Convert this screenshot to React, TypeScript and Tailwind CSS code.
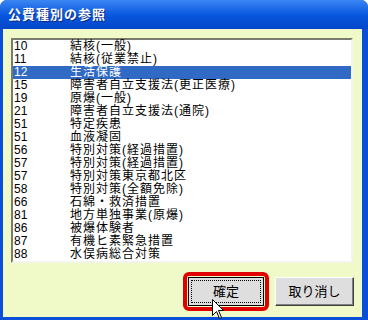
import React from "react";

const rows: [string, string][] = [
  ["10", "結核(一般)"],
  ["11", "結核(従業禁止)"],
  ["12", "生活保護"],
  ["15", "障害者自立支援法(更正医療)"],
  ["19", "原爆(一般)"],
  ["21", "障害者自立支援法(通院)"],
  ["51", "特定疾患"],
  ["51", "血液凝固"],
  ["56", "特別対策(経過措置)"],
  ["57", "特別対策(経過措置)"],
  ["57", "特別対策東京都北区"],
  ["58", "特別対策(全額免除)"],
  ["66", "石綿・救済措置"],
  ["81", "地方単独事業(原爆)"],
  ["86", "被爆体験者"],
  ["87", "有機ヒ素緊急措置"],
  ["88", "水俣病総合対策"],
];

const font = { fontFamily: '"Liberation Sans", "Noto Sans CJK JP", sans-serif' };

export default function App() {
  const selected = 2;

  return (
    <div className="relative w-[368px] h-[320px] overflow-hidden bg-white" style={font}>
      <div className="flex flex-col w-full h-full rounded-t-[7px] overflow-hidden bg-[#0a4fd8]">
        {/* title bar */}
        <div className="h-[29px] shrink-0 flex items-center pl-[8px] bg-gradient-to-b from-[#3a86f2] via-[#0858e0] to-[#0446c8]">
          <span className="text-white text-[13px] font-bold tracking-[1px] [text-shadow:1px_1px_0_#0a2a80]">
            公費種別の参照
          </span>
        </div>

        {/* window body */}
        <div className="flex-1 flex flex-col ml-[3px] mr-[6px] mb-[3px] bg-[#effac8]">
          {/* list box */}
          <div className="ml-[8px] mt-[9px] w-[342px] border-2 border-t-[#7b7b6b] border-l-[#7b7b6b] border-r-[#f4f4ee] border-b-[#f4f4ee] bg-white">
            <div className="flex flex-col">
              {rows.map(([code, name], i) => (
                <div
                  key={i}
                  className={
                    i === selected
                      ? "flex h-[13px] items-center text-[12px] leading-[13px] bg-[#316ac5] text-white"
                      : "flex h-[13px] items-center text-[12px] leading-[13px] text-black"
                  }
                >
                  <span className="w-[57px] pl-[1px]">{code}</span>
                  <span className="tracking-[1px]">{name}</span>
                </div>
              ))}
            </div>
          </div>

          {/* buttons */}
          <div className="flex justify-end items-center gap-[6px] pr-[8px] mt-[9px]">
            <div className="border-[4px] border-[#e00000] rounded-[6px] p-[1px]">
              <button className="w-[76px] h-[29px] bg-[#dedede] border border-black flex items-center justify-center">
                <span className="w-[70px] h-[23px] border border-dotted border-black flex items-center justify-center text-[13px] text-black">
                  確定
                </span>
              </button>
            </div>
            <button className="w-[79px] h-[29px] bg-[#dedede] border border-t-white border-l-white border-r-[#404040] border-b-[#404040] shadow-[inset_-1px_-1px_0_#808080] text-[13px] text-black">
              取り消し
            </button>
          </div>
        </div>
      </div>

      {/* mouse cursor */}
      <svg className="absolute left-[212px] top-[299px]" width="13" height="21" viewBox="0 0 13 21">
        <path d="M0.5 0.5 L0.5 16.5 L4.5 12.5 L7.5 19.5 L9.5 18.5 L6.5 11.5 L11.5 11.5 Z" fill="#fff" stroke="#000" strokeWidth="1" />
      </svg>
    </div>
  );
}
